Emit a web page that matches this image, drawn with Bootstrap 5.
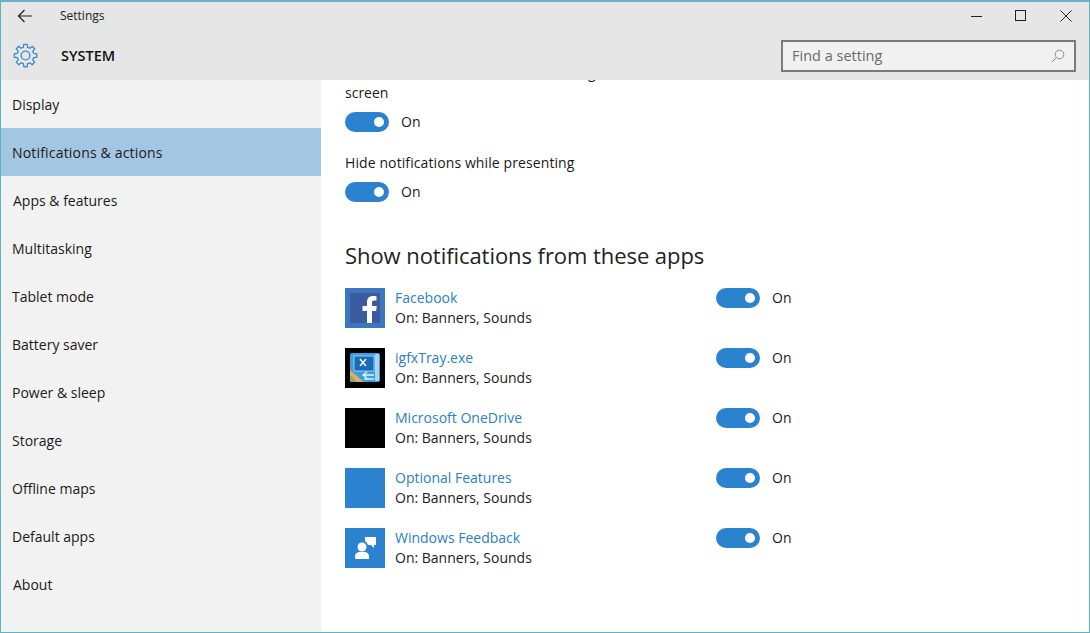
<!DOCTYPE html>
<html lang="en"><head><meta charset="utf-8"><title>Settings</title>
<link href="https://cdn.jsdelivr.net/npm/bootstrap@5.3.0/dist/css/bootstrap.min.css" rel="stylesheet">
<style>
html,body{height:100%;overflow:hidden}
body{font-family:"Open Sans","Noto Sans",sans-serif;font-size:14px;color:#1a1a1a;background:#fff}
.win{width:1090px;height:633px;border:1px solid #5fb3c4;border-top:2px solid #6ab0c9;overflow:hidden;display:flex;flex-direction:column}
.head{background:#e6e6e6;height:78px;flex:none}
.tbar{height:27px}
.backbtn{width:46px;padding-left:16px}
.backbtn svg{display:block}
.apptitle{font-size:12px;margin-left:13px;color:#222}
.winbtn{width:45px;display:flex;justify-content:center}
.winbtn svg{display:block}
.winbtns{margin-right:1px}
.hbar{height:51px;padding:2px 13px 0 12px}
.systitle{font-size:14.5px;font-weight:600;margin-left:23px;color:#111}
.searchbox{width:295px;height:32px;border:2px solid #7a7a7a;background:#f1f1f1;color:#6b6b6b;font-size:14.5px;padding:0 9px}
.bodyrow{flex:1;min-height:0}
.side{width:320px;flex:none;background:#f2f2f2}
.sideitem{height:48px;padding-left:11px;display:flex;align-items:center;color:#1a1a1a}
.sideitem.cur{background:#a3c7e2}
.nudge{padding-left:12px}
.tracked{letter-spacing:.18px}
.tracked-sm{letter-spacing:.1px}
.maincol{flex:1;overflow:hidden;padding-left:24px}
.scrolled{margin-top:-17px}
.txtline{width:425px;line-height:20px}
.togrow{margin-top:9px}
.nextset{margin-top:21px}
.tog{width:44px;height:20px;border-radius:10px;background:#2b83cf;position:relative;flex:none;display:block}
.tog::after{content:"";position:absolute;width:10px;height:10px;border-radius:50%;background:#fff;right:5px;top:5px}
.onlab{margin-left:12px;line-height:20px}
.secttitle{font-size:22px;font-weight:400;line-height:30px;margin:38px 0 18px;color:#222;letter-spacing:-.06px}
.approw{height:40px;margin-bottom:20px}
.appicon{width:40px;height:40px;flex:none;display:block}
.appinfo{width:321px;margin-left:10px;line-height:20px}
.appname{color:#2a81c4}
</style></head>
<body>
<div class="win">
 <div class="head">
  <div class="tbar d-flex align-items-center">
   <div class="backbtn"><svg width="16" height="14" viewBox="0 0 16 14"><path d="M15 7H1.500M7.500 1 1.500 7l6 6" fill="none" stroke="#222" stroke-width="1.200"/></svg></div>
   <span class="apptitle">Settings</span>
   <div class="winbtns d-flex ms-auto">
    <div class="winbtn"><svg width="12" height="12"><path d="M1 6.500h11" stroke="#222"/></svg></div>
    <div class="winbtn"><svg width="12" height="12"><rect x=".5" y=".5" width="10" height="10" fill="none" stroke="#222"/></svg></div>
    <div class="winbtn"><svg width="12" height="12"><path d="M.5.5l11 11M11.500.5l-11 11" stroke="#222"/></svg></div>
   </div>
  </div>
  <div class="hbar d-flex align-items-center">
   <svg width="25" height="25" viewBox="-13 -13 26 26"><g fill="none" stroke="#3d8ccb" stroke-width="1.400" stroke-linejoin="round"><path d="M-2.130-8.540-1.850-11.650H1.850L2.130-8.540 4.530-7.550 6.930-9.550 9.550-6.930 7.550-4.530 8.540-2.130 11.650-1.850V1.850L8.540 2.130 7.550 4.530 9.550 6.930 6.930 9.550 4.530 7.550 2.130 8.540 1.850 11.650H-1.850L-2.130 8.540-4.530 7.550-6.930 9.550-9.550 6.930-7.550 4.530-8.540 2.130-11.650 1.850V-1.850L-8.540-2.130-7.550-4.530-9.550-6.930-6.930-9.550-4.530-7.550z"/><circle r="4.500"/></g></svg>
   <span class="systitle">SYSTEM</span>
   <div class="searchbox ms-auto d-flex align-items-center justify-content-between">
    <span>Find a setting</span>
    <svg width="14" height="14" viewBox="0 0 14 14"><circle cx="8.500" cy="5.500" r="4.300" fill="none" stroke="#8a8a8a"/><path d="M5.300 8.700 1 13" stroke="#8a8a8a"/></svg>
   </div>
  </div>
 </div>
 <div class="bodyrow d-flex">
  <nav class="side">
   <div class="sideitem">Display</div>
   <div class="sideitem cur tracked">Notifications &amp; actions</div>
   <div class="sideitem nudge">Apps &amp; features</div>
   <div class="sideitem">Multitasking</div>
   <div class="sideitem">Tablet mode</div>
   <div class="sideitem">Battery saver</div>
   <div class="sideitem">Power &amp; sleep</div>
   <div class="sideitem">Storage</div>
   <div class="sideitem">Offline maps</div>
   <div class="sideitem">Default apps</div>
   <div class="sideitem nudge">About</div>
  </nav>
  <main class="maincol">
   <div class="scrolled">
    <div class="txtline">Show alarms, reminders and incoming VoIP calls on the lock screen</div>
    <div class="togrow d-flex align-items-center"><span class="tog"></span><span class="onlab">On</span></div>
    <div class="txtline nextset tracked-sm">Hide notifications while presenting</div>
    <div class="togrow d-flex align-items-center"><span class="tog"></span><span class="onlab">On</span></div>
    <h2 class="secttitle">Show notifications from these apps</h2>

    <div class="approw d-flex">
     <svg class="appicon" viewBox="0 0 40 40"><rect width="40" height="40" fill="#3a77bd"/><rect x="5" y="5" width="30" height="30" fill="#3b5b9e"/><path d="M22 35V23h-4.500v-5H22v-4c0-4 2.500-6 6-6 1.700 0 3 .1 3.500.2v4.400h-2.300c-1.900 0-2.200 1-2.200 2.300V18h4.800l-.7 5H27v12z" fill="#fff"/></svg>
     <div class="appinfo"><div class="appname">Facebook</div><div>On: Banners, Sounds</div></div>
     <span class="tog"></span><span class="onlab">On</span>
    </div>
    <div class="approw d-flex">
     <svg class="appicon" viewBox="0 0 40 40"><rect width="40" height="40" fill="#000"/><rect x="5" y="5" width="30" height="29" rx="2" fill="#3a9fe0"/><path d="M5 22l14 12H7a2 2 0 0 1-2-2z" fill="#e0b060"/><path d="M5 27l7 7H7a2 2 0 0 1-2-2z" fill="#7fb06a"/><rect x="9" y="8" width="20" height="15" fill="#1c6ab5" stroke="#8fd0f5"/><path d="M15 11l6 7M21 11l-6 7" stroke="#fff" stroke-width="1.500"/><rect x="30" y="6" width="4" height="27" fill="#a9d5f0"/><path d="M19 27h10M19 31h10M22 24l-4 3 4 3" stroke="#e4f3ff" stroke-width="1.300" fill="none"/></svg>
     <div class="appinfo"><div class="appname">igfxTray.exe</div><div>On: Banners, Sounds</div></div>
     <span class="tog"></span><span class="onlab">On</span>
    </div>
    <div class="approw d-flex">
     <svg class="appicon" viewBox="0 0 40 40"><rect width="40" height="40" fill="#000"/></svg>
     <div class="appinfo"><div class="appname">Microsoft OneDrive</div><div>On: Banners, Sounds</div></div>
     <span class="tog"></span><span class="onlab">On</span>
    </div>
    <div class="approw d-flex">
     <svg class="appicon" viewBox="0 0 40 40"><rect width="40" height="40" fill="#2b83cf"/></svg>
     <div class="appinfo"><div class="appname">Optional Features</div><div>On: Banners, Sounds</div></div>
     <span class="tog"></span><span class="onlab">On</span>
    </div>
    <div class="approw d-flex">
     <svg class="appicon" viewBox="0 0 40 40"><rect width="40" height="40" fill="#2b83cf"/><path d="M20 9h11v8h-2v3l-3-3h-3a7 7 0 0 0-3-4z" fill="#fff"/><circle cx="17" cy="19" r="4.500" fill="#fff"/><path d="M10 31v-2.500c0-3 2-4.500 4.500-4.500h5c2.500 0 4.500 1.500 4.500 4.500V31z" fill="#fff"/></svg>
     <div class="appinfo"><div class="appname">Windows Feedback</div><div>On: Banners, Sounds</div></div>
     <span class="tog"></span><span class="onlab">On</span>
    </div>
   </div>
  </main>
 </div>
</div>
</body></html>
